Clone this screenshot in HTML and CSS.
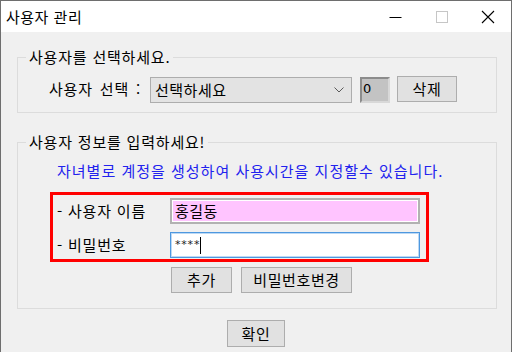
FILE: index.html
```html
<!DOCTYPE html>
<html lang="ko">
<head>
<meta charset="utf-8">
<link rel="stylesheet" href="styles.css">
</head>
<body>
<div class="window">
  <div class="titlebar">
    <span class="title">사용자 관리</span>
    <div class="controls">
      <svg class="ctl" width="46" height="31" viewBox="0 0 46 31"><line x1="16.5" y1="16.5" x2="28.5" y2="16.5" stroke="#000" stroke-width="1"/></svg>
      <svg class="ctl" width="46" height="31" viewBox="0 0 46 31"><rect x="17.5" y="10.5" width="11" height="11" fill="none" stroke="#c6c6c6" stroke-width="1"/></svg>
      <svg class="ctl" width="46" height="31" viewBox="0 0 46 31"><path d="M17 10 L29 22 M29 10 L17 22" stroke="#000" stroke-width="1.1" fill="none"/></svg>
    </div>
  </div>
  <div class="client">
    <div class="group g1">
      <span class="legend">사용자를 선택하세요.</span>
      <div class="select-row">
        <span class="sel-label">사용자 선택 :</span>
        <div class="combo">
          <span>선택하세요</span>
          <svg width="10" height="6" viewBox="0 0 10 6"><path d="M0.5 0.5 L5 5 L9.5 0.5" stroke="#5a5a5a" stroke-width="1" fill="none"/></svg>
        </div>
        <div class="count">0</div>
        <button class="btn btn-del">삭제</button>
      </div>
    </div>
    <div class="group g2">
      <span class="legend">사용자 정보를 입력하세요!</span>
      <p class="notice">자녀별로 계정을 생성하여 사용시간을 지정할수 있습니다.</p>
      <div class="redbox">
        <div class="field">
          <span class="f-label">- 사용자 이름</span>
          <div class="input pink">홍길동</div>
        </div>
        <div class="field">
          <span class="f-label">- 비밀번호</span>
          <div class="input focus"><span class="stars">****</span><span class="caret"></span></div>
        </div>
      </div>
      <div class="actions">
        <button class="btn btn-add">추가</button>
        <button class="btn btn-chg">비밀번호변경</button>
      </div>
    </div>
    <div class="footer">
      <button class="btn btn-ok">확인</button>
    </div>
  </div>
</div>
</body>
</html>
```
FILE: styles.css
```css
* { box-sizing: border-box; }
html, body { margin: 0; padding: 0; background: #f0f0f0; }
body {
  font-family: "Noto Sans CJK KR", "Noto Sans", sans-serif;
  font-size: 15px;
  color: #000;
}
.window {
  width: 512px;
  height: 352px;
  border: 1px solid #6e6e6e;
  border-bottom: none;
  background: #f0f0f0;
  overflow: hidden;
}
.titlebar {
  height: 31px;
  background: #fff;
  display: flex;
  align-items: center;
  justify-content: space-between;
}
.title {
  font-size: 15px;
  line-height: 20px;
  padding-left: 5px;
  letter-spacing: 0.5px;
}
.controls { display: flex; }
.ctl { display: block; }
.client {
  padding: 25px 14px 0 16px;
}
.group {
  position: relative;
  border: 1px solid #dcdcdc;
  width: 480px;
}
.legend {
  position: absolute;
  top: -11px;
  left: 8px;
  padding: 0 3px;
  background: #f0f0f0;
  line-height: 20px;
  letter-spacing: 0.8px;
}
.g1 { padding: 19px 0 9px 31px; }
.select-row {
  display: flex;
  align-items: flex-start;
  height: 26px;
}
.sel-label {
  width: 101px;
  line-height: 24px;
  letter-spacing: 0.8px;
  word-spacing: 2px;
}
.combo {
  width: 202px;
  height: 26px;
  background: #e3e3e3;
  border: 1px solid #adadad;
  display: flex;
  align-items: center;
  justify-content: space-between;
  padding: 0 7px 0 4px;
  letter-spacing: 0.5px;
  line-height: 20px;
}
.combo svg { display: block; }
.count {
  width: 30px;
  height: 26px;
  margin-left: 8px;
  background: #c3c3c3;
  border: 2px solid #8c8c8c;
  border-right-color: #d8d8d8;
  border-bottom-color: #d8d8d8;
  padding-left: 1px;
  line-height: 20px;
  font-family: "DejaVu Sans", sans-serif;
  font-size: 13px;
}
.btn {
  font-family: inherit;
  font-size: 15px;
  line-height: 20px;
  background: #e1e1e1;
  border: 1px solid #adadad;
  height: 26px;
  padding: 0;
  color: #000;
  letter-spacing: 0.6px;
}
.btn-del { width: 60px; margin-left: 7px; margin-top: -1px; }
.g2 { padding: 0 0 15px 0; margin-top: 29px; }
.notice {
  margin: 18px 0 11px 39px;
  line-height: 20px;
  color: #2222ee;
  letter-spacing: 1px;
  white-space: nowrap;
}
.redbox {
  margin-left: 32px;
  width: 379px;
  border: 3px solid #ff0000;
  padding: 3px 6px 1px 4px;
  display: flex;
  flex-direction: column;
  gap: 8px;
}
.field {
  display: flex;
  align-items: center;
  height: 26px;
}
.f-label {
  width: 113px;
  line-height: 20px;
  letter-spacing: 0.8px;
  white-space: nowrap;
}
.input {
  width: 250px;
  height: 26px;
  display: flex;
  align-items: center;
  padding-left: 3px;
  line-height: 20px;
}
.pink {
  background: #ffc4ff;
  border: 2px solid #b2b2b2;
  box-shadow: inset 0 0 0 1px #fff;
  letter-spacing: 0.5px;
}
.focus {
  background: #fff;
  border: 1px solid #4e98df;
  box-shadow: inset 0 0 0 1px #bcd9f5;
  padding-left: 4px;
}
.stars {
  font-family: "DejaVu Sans", sans-serif;
  font-size: 11px;
  letter-spacing: 0.8px;
  color: #222;
  line-height: 14px;
}
.caret {
  width: 1px;
  height: 17px;
  background: #000;
  margin-left: 0;
}
.actions {
  display: flex;
  gap: 9px;
  margin: 5px 0 0 153px;
}
.btn-add { width: 61px; }
.btn-chg { width: 111px; }
.footer {
  display: flex;
  justify-content: center;
  margin-top: 11px;
  padding-right: 2px;
}
.btn-ok { width: 58px; height: 27px; }
```
